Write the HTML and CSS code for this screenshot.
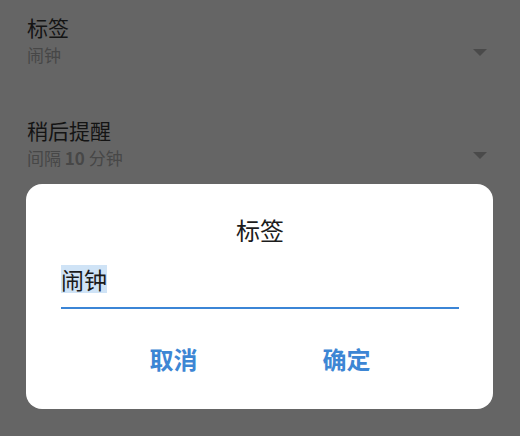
FILE: index.html
```html
<!DOCTYPE html>
<html lang="zh-CN">
<head>
<meta charset="utf-8">
<title>标签</title>
<link rel="stylesheet" href="styles.css">
</head>
<body>
<div class="screen">
  <div class="list">
    <div class="row">
      <div class="row-text">
        <div class="row-title">标签</div>
        <div class="row-sub">闹钟</div>
      </div>
      <span class="arrow"></span>
    </div>
    <div class="row">
      <div class="row-text">
        <div class="row-title">稍后提醒</div>
        <div class="row-sub">间隔 <span class="num">10</span> 分钟</div>
      </div>
      <span class="arrow"></span>
    </div>
  </div>

  <div class="dialog">
    <div class="dialog-title">标签</div>
    <div class="field"><span class="field-text">闹钟</span></div>
    <div class="actions">
      <div class="btn">取消</div>
      <div class="btn">确定</div>
    </div>
  </div>
</div>
</body>
</html>
```

FILE: styles.css
```css
html, body {
  margin: 0;
  padding: 0;
}
body {
  background: #656565;
  font-family: "Noto Sans CJK SC", "Noto Sans", sans-serif;
}
.screen {
  position: relative;
  width: 520px;
  height: 436px;
  overflow: hidden;
}
.list {
  display: flex;
  flex-direction: column;
}
.row {
  display: flex;
  align-items: flex-start;
  justify-content: space-between;
  height: 103px;
  box-sizing: border-box;
  padding: 12px 33px 0 27px;
}
.row-title {
  font-size: 21px;
  line-height: 30px;
  color: #141414;
}
.row-sub {
  font-size: 17px;
  line-height: 26px;
  color: #474747;
}
.num {
  font-weight: 700;
}
.arrow {
  margin-top: 37px;
  width: 0;
  height: 0;
  border-left: 7px solid transparent;
  border-right: 7px solid transparent;
  border-top: 7px solid #4a4a4a;
}
.dialog {
  position: absolute;
  left: 26px;
  top: 184px;
  width: 467px;
  height: 225px;
  box-sizing: border-box;
  padding: 30px 34px 0 35px;
  background: #ffffff;
  border-radius: 16px;
}
.dialog-title {
  text-align: center;
  font-size: 24px;
  line-height: 32px;
  color: #1c1c1c;
}
.field {
  margin-top: 19px;
  padding-bottom: 14px;
  border-bottom: 2px solid #3b85d6;
  line-height: 28px;
  height: 28px;
}
.field-text {
  display: inline-block;
  font-size: 23px;
  line-height: 28px;
  color: #1a1a1a;
  background: #cfe3f6;
}
.actions {
  display: flex;
  justify-content: center;
  margin-top: 26px;
}
.btn {
  width: 173px;
  text-align: center;
  font-size: 24px;
  line-height: 48px;
  font-weight: 700;
  color: #3d86d4;
}
```
